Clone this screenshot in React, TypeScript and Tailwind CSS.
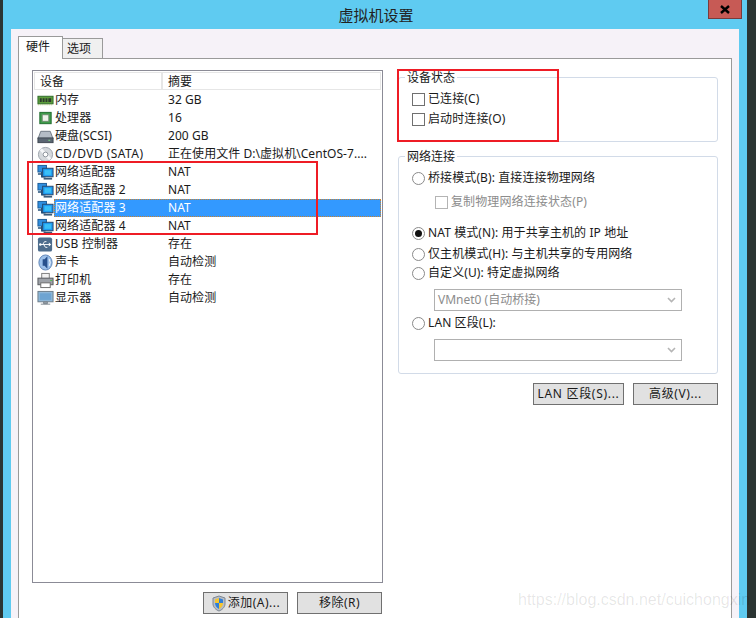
import React from "react";

function Net() {
  return (
    <svg width="17" height="17" viewBox="0 0 18 17">
      <rect x="1" y="1" width="9" height="7" fill="#2f8fe0" stroke="#1b5a96" />
      <path d="M5 8v5h4M1 10h5" stroke="#25507a" strokeWidth="1.5" fill="none" />
      <rect x="6" y="4" width="11" height="9" fill="#1f9bf0" stroke="#24456a" />
      <rect x="8" y="6" width="7" height="5" fill="#39c0f7" />
      <path d="M7 15h9" stroke="#3b5a78" strokeWidth="2" />
    </svg>
  );
}
function Mem() {
  return (
    <svg width="17" height="17" viewBox="0 0 18 17">
      <rect x="1" y="4" width="16" height="8" fill="#5d9e3c" stroke="#2d6a2a" />
      <path d="M3 6h2v4H3zM6 6h2v4H6zM9 6h2v4H9zM12 6h3v4h-3z" fill="#2d3a2d" />
      <path d="M1 13h16" stroke="#a8c070" strokeDasharray="1 1" />
    </svg>
  );
}
function Cpu() {
  return (
    <svg width="17" height="17" viewBox="0 0 18 17">
      <rect x="3" y="2" width="12" height="12" fill="#3e9c4a" stroke="#1f6a2c" />
      <rect x="5.5" y="4.5" width="7" height="7" fill="#eef2ea" stroke="#6b8a6e" />
    </svg>
  );
}
function Disk() {
  return (
    <svg width="17" height="17" viewBox="0 0 18 17">
      <path d="M4 3h10l3 8H1z" fill="#b4bcc6" stroke="#6c7682" />
      <rect x="1" y="10" width="16" height="5" fill="#5b6673" stroke="#3e4650" />
      <rect x="12" y="12" width="2" height="1" fill="#7fe07f" />
    </svg>
  );
}
function Cd() {
  return (
    <svg width="17" height="17" viewBox="0 0 18 17">
      <circle cx="9" cy="8.5" r="7.5" fill="#d4d8dc" stroke="#9aa2aa" />
      <path d="M9 8.5L4 3M9 8.5l5 5" stroke="#f4f6f8" strokeWidth="3" />
      <circle cx="9" cy="8.5" r="2.5" fill="#fff" stroke="#8a929a" />
    </svg>
  );
}
function Usb() {
  return (
    <svg width="17" height="17" viewBox="0 0 18 17">
      <rect x="1" y="1" width="15" height="15" rx="2" fill="#4d6c8c" />
      <path d="M3 8.5h10M6 8.5l2-3h2M7 8.5l2 3h2" stroke="#fff" fill="none" />
      <path d="M12.5 6.5l2.5 2-2.5 2z" fill="#fff" />
      <circle cx="3.5" cy="8.5" r="1.3" fill="#fff" />
    </svg>
  );
}
function Sound() {
  return (
    <svg width="17" height="17" viewBox="0 0 18 17">
      <ellipse cx="9" cy="8.5" rx="7" ry="8" fill="#9cc0ea" stroke="#5d83b5" />
      <path d="M6 5h2l3-3v13l-3-3H6z" fill="#28508c" />
      <path d="M13 5q2 3.5 0 7" stroke="#fff" fill="none" />
    </svg>
  );
}
function Printer() {
  return (
    <svg width="17" height="17" viewBox="0 0 18 17">
      <rect x="5" y="1" width="8" height="6" fill="#f2f2f2" stroke="#7b7b7b" />
      <rect x="1" y="6" width="16" height="7" fill="#9ea2a8" stroke="#55585c" />
      <rect x="4" y="11" width="10" height="5" fill="#fff" stroke="#6a6a6a" />
      <rect x="14" y="8" width="2" height="1" fill="#4ac04a" />
    </svg>
  );
}
function Monitor() {
  return (
    <svg width="17" height="17" viewBox="0 0 18 17">
      <rect x="1" y="1" width="16" height="11" fill="#8fb7d8" stroke="#6b7b88" />
      <rect x="3" y="3" width="12" height="7" fill="#6ea4d2" />
      <path d="M7 12h4v2H7zM4 14.5h10" fill="#9aa4ac" stroke="#7b858d" />
    </svg>
  );
}
function Shield() {
  return (
    <svg width="16" height="17" viewBox="0 0 16 17">
      <path d="M8 1l6 2v6c0 3-3 6-6 7-3-1-6-4-6-7V3z" fill="#b8bec6" stroke="#7e8792" />
      <path d="M8 3l4 1.5V8H8z" fill="#2f7fd8" />
      <path d="M8 3L4 4.5V8h4z" fill="#f7c52e" />
      <path d="M4 8h4v6c-2-1-4-3-4-6z" fill="#2f7fd8" />
      <path d="M8 8h4c0 3-2 5-4 6z" fill="#f7c52e" />
    </svg>
  );
}

const rows: [React.ReactNode, string, string, boolean?][] = [
  [<Mem />, "内存", "32 GB"],
  [<Cpu />, "处理器", "16"],
  [<Disk />, "硬盘(SCSI)", "200 GB"],
  [<Cd />, "CD/DVD (SATA)", "正在使用文件 D:\\虚拟机\\CentOS-7...."],
  [<Net />, "网络适配器", "NAT"],
  [<Net />, "网络适配器 2", "NAT"],
  [<Net />, "网络适配器 3", "NAT", true],
  [<Net />, "网络适配器 4", "NAT"],
  [<Usb />, "USB 控制器", "存在"],
  [<Sound />, "声卡", "自动检测"],
  [<Printer />, "打印机", "存在"],
  [<Monitor />, "显示器", "自动检测"],
];

function Check({ label, disabled }: { label: string; disabled?: boolean }) {
  return (
    <div className={"flex items-center h-[18px] tracking-[0.12px] " + (disabled ? "text-[#8c8c8c]" : "")}>
      <span className={"w-[13px] h-[13px] border bg-white mr-[3px] shrink-0 " + (disabled ? "border-[#b4b4b4]" : "border-[#707070]")} />
      {label}
    </div>
  );
}

function Radio({ label, on }: { label: string; on?: boolean }) {
  return (
    <div className="flex items-center h-[18px] tracking-[0.1px]">
      <span className="w-[13px] h-[13px] rounded-full border border-[#8a8a8a] bg-white mr-[3px] shrink-0 flex items-center justify-center">
        {on && <span className="w-[7px] h-[7px] rounded-full bg-[#111]" />}
      </span>
      {label}
    </div>
  );
}

function Select({ label }: { label?: string }) {
  return (
    <div className="ml-[22px] w-[248px] h-[22px] border border-[#b0b0b0] bg-white flex items-center justify-between pl-[3px] pr-[5px] text-[#8c8c8c]">
      <span>{label}</span>
      <svg width="9" height="6" viewBox="0 0 9 6">
        <path d="M1 1l3.5 3.5L8 1" stroke="#b5b5b5" strokeWidth="1.6" fill="none" />
      </svg>
    </div>
  );
}

function Btn({ children, w }: { children: React.ReactNode; w: string }) {
  return (
    <div className={"h-[22px] border border-[#707070] bg-[#e1e1e1] flex items-center justify-center " + w}>
      {children}
    </div>
  );
}

export default function App() {
  return (
    <div
      className="relative w-[756px] h-[618px] overflow-hidden flex bg-[#2b3533] text-[12px] leading-[16px] text-[#1a1a1a]"
      style={{ fontFamily: '"Noto Sans", "Noto Sans CJK SC", sans-serif' }}
    >
      <div className="w-[3px] shrink-0" />
      <div className="w-[744px] shrink-0 bg-[#5fcbf1] flex flex-col">
        <div className="relative h-[29px] shrink-0 flex items-center justify-center text-[15px] text-[#222]">
          <span className="ml-[2px]">虚拟机设置</span>
          <div className="absolute right-[5px] top-0 w-[34px] h-[19px] bg-[#c75a55] border border-t-0 border-[#7a3b3b] flex items-center justify-center">
            <svg width="10" height="9" viewBox="0 0 10 9">
              <path d="M1 1l8 7M9 1L1 8" stroke="#000" strokeWidth="2.4" />
            </svg>
          </div>
        </div>
        <div className="mx-[8px] flex-1 bg-[#f6f2f8] flex flex-col pt-[7px] px-[7px] min-h-0">
          <div className="flex items-end h-[22px] relative z-10 shrink-0">
            <div className="w-[45px] h-[23px] border border-b-0 border-[#9a9a9a] bg-white pl-[7px] pt-[2px] -mb-px">硬件</div>
            <div className="w-[40px] h-[20px] border border-l-0 border-b-0 border-[#9a9a9a] bg-[#f0f0f0] pl-[4px] pt-[2px]">选项</div>
          </div>
          <div className="flex-1 bg-white border border-b-0 border-[#9a9a9a] flex pl-[13px] pt-[11px] min-h-0">
            <div className="w-[351px] shrink-0 flex flex-col">
              <div className="h-[513px] border border-[#8b8b96] bg-white pt-px px-px">
                <div className="flex h-[18px] border border-[#e6e6e6] mb-px pt-px">
                  <div className="w-[128px] border-r-2 border-[#e6e6e6] pl-[5px] -mt-px pt-px">设备</div>
                  <div className="pl-[5px]">摘要</div>
                </div>
                {rows.map(([icon, name, sum, sel], i) => (
                  <div key={i} className="flex items-center h-[18px] pl-[3px]">
                    <div className="w-[17px] shrink-0 flex items-center">{icon}</div>
                    <div
                      className={
                        "flex flex-1 h-[18px] items-center border border-dotted " +
                        (sel ? "bg-[#3399ff] text-white border-[#c9822f]" : "border-transparent")
                      }
                    >
                      <div className={"w-[113px] shrink-0 whitespace-nowrap " + (name.startsWith("CD") ? "tracking-[0.45px]" : "tracking-[0.1px]")}>{name}</div>
                      <div className="whitespace-nowrap tracking-[0.05px]">{sum}</div>
                    </div>
                  </div>
                ))}
              </div>
              <div className="flex justify-end mt-[9px] gap-[9px] pr-px">
                <Btn w="w-[85px]">
                  <span className="mr-px"><Shield /></span>
                  <span className="tracking-[0.5px]">添加(A)...</span>
                </Btn>
                <Btn w="w-[85px]"><span className="tracking-[0.5px]">移除(R)</span></Btn>
              </div>
            </div>
            <div className="ml-[15px] w-[320px] shrink-0 flex flex-col">
              <div className="relative mt-[7px] h-[65px] border border-[#d2dbe8] rounded-[3px] pt-[12px] pl-[13px]">
                <span className="absolute left-[6px] -top-[8px] bg-white px-[2px]">设备状态</span>
                <Check label="已连接(C)" />
                <div className="mt-[2px]"><Check label="启动时连接(O)" /></div>
              </div>
              <div className="relative mt-[14px] h-[218px] border border-[#d2dbe8] rounded-[3px] pt-[12px] pl-[13px]">
                <span className="absolute left-[6px] -top-[8px] bg-white px-[2px]">网络连接</span>
                <Radio label="桥接模式(B): 直接连接物理网络" />
                <div className="ml-[23px] mt-[6px]"><Check label="复制物理网络连接状态(P)" disabled /></div>
                <div className="mt-[13px]"><Radio on label="NAT 模式(N): 用于共享主机的 IP 地址" /></div>
                <div className="mt-[3px]"><Radio label="仅主机模式(H): 与主机共享的专用网络" /></div>
                <div className="mt-px"><Radio label="自定义(U): 特定虚拟网络" /></div>
                <div className="mt-[7px]"><Select label="VMnet0 (自动桥接)" /></div>
                <div className="mt-[3px]"><Radio label="LAN 区段(L):" /></div>
                <div className="mt-[7px]"><Select /></div>
              </div>
              <div className="flex justify-end mt-[9px] gap-[9px]">
                <Btn w="w-[91px]"><span className="tracking-[0.7px]">LAN 区段(S)...</span></Btn>
                <Btn w="w-[85px]"><span className="tracking-[0.6px]">高级(V)...</span></Btn>
              </div>
            </div>
          </div>
        </div>
      </div>
      <div className="absolute left-[27px] top-[161px] w-[291px] h-[74px] border-2 border-[#ee1c25]" />
      <div className="absolute left-[397px] top-[69px] w-[162px] h-[73px] border-2 border-[#ee1c25]" />
      <div
        className="absolute left-[518px] top-[589px] text-[16px] leading-[22px] text-[#000]/10 whitespace-nowrap"
        style={{ fontFamily: '"Liberation Sans", sans-serif' }}
      >
        https://blog.csdn.net/cuichongxin
      </div>
    </div>
  );
}
